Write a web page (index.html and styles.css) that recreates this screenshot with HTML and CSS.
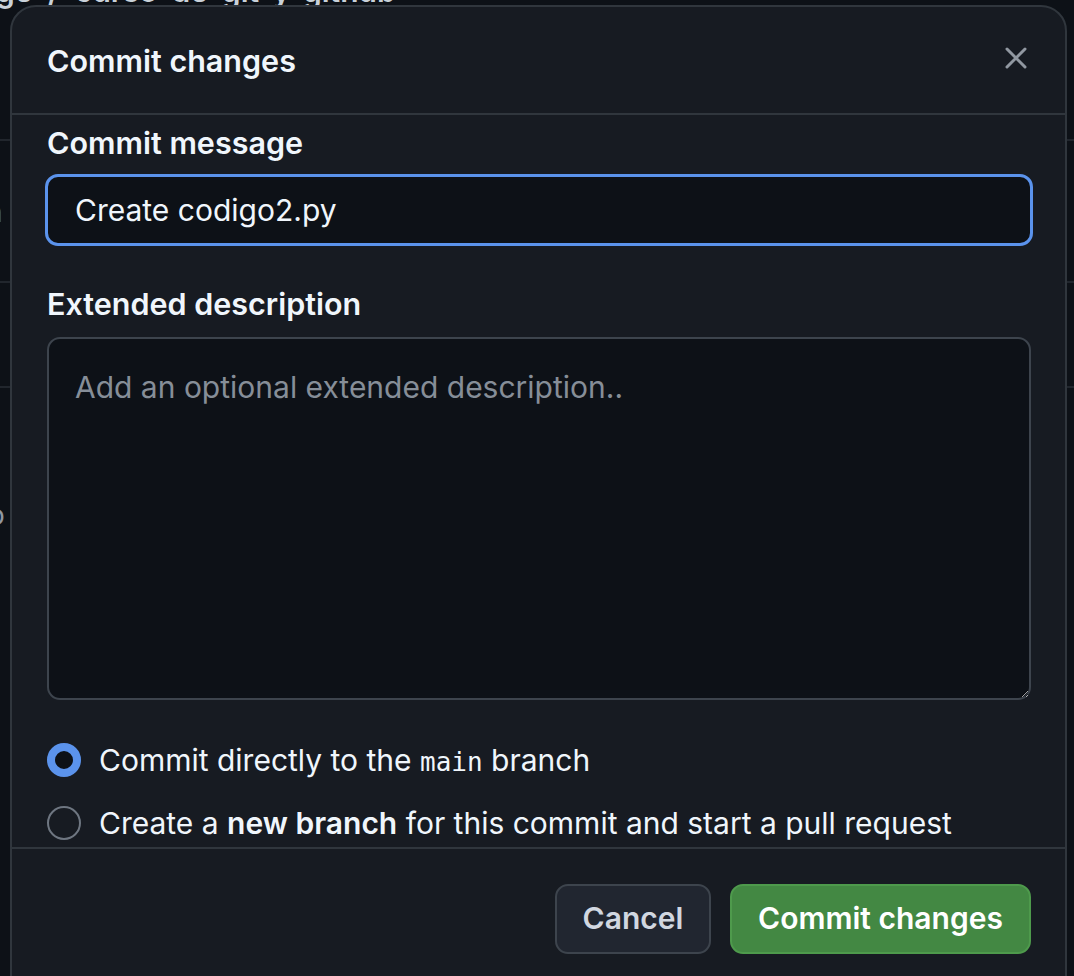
FILE: index.html
```html
<!DOCTYPE html>
<html lang="en">
<head>
<meta charset="utf-8">
<title>Commit changes</title>
<link rel="stylesheet" href="styles.css">
</head>
<body>
<div class="page">
  <div class="crumbs">ge / curso-de-git-y-github</div>
  <div class="page-row row-a"></div>
  <div class="page-row row-b"><span class="edge-link">n</span></div>
  <div class="page-row row-c"></div>
  <div class="page-row row-d"><span class="edge-text">o</span></div>
</div>

<div class="dialog" role="dialog" aria-label="Commit changes">
  <div class="dialog-header">
    <h1 class="dialog-title">Commit changes</h1>
    <button class="close-btn" aria-label="Close">
      <svg width="22" height="22" viewBox="0 0 22 22"><path d="M2 2 L20 20 M20 2 L2 20" stroke="#9198a1" stroke-width="3" stroke-linecap="round" fill="none"/></svg>
    </button>
  </div>
  <div class="dialog-body">
    <label class="field-label" for="msg">Commit message</label>
    <input id="msg" class="text-input" type="text" value="Create codigo2.py">
    <label class="field-label label-ext" for="desc">Extended description</label>
    <textarea id="desc" class="text-area" placeholder="Add an optional extended description.."></textarea>
    <div class="choices">
      <div class="choice">
        <span class="radio checked"></span>
        <span class="choice-text">Commit directly to the <code class="mono">main</code> branch</span>
      </div>
      <div class="choice">
        <span class="radio"></span>
        <span class="choice-text">Create a <strong>new branch</strong> for this commit and start a pull request</span>
      </div>
    </div>
  </div>
  <div class="dialog-footer">
    <button class="btn btn-cancel">Cancel</button>
    <button class="btn btn-primary">Commit changes</button>
  </div>
</div>
</body>
</html>
```
FILE: styles.css
```css
html, body {
  margin: 0;
  padding: 0;
}
body {
  width: 1074px;
  height: 976px;
  overflow: hidden;
  background: #0d1117;
  font-family: Inter, "Noto Sans", "Liberation Sans", sans-serif;
  color: #f0f6fc;
  position: relative;
}

/* background page (mostly hidden behind the dialog) */
.page {
  display: flex;
  flex-direction: column;
}
.crumbs {
  margin-top: -24px;
  height: 30px;
  line-height: 30px;
  margin-left: -4px;
  font-size: 30px;
  color: #c9d1d9;
  font-weight: 600;
  white-space: nowrap;
  word-spacing: 8px;
}
.page-row {
  border-bottom: 2px solid #21262d;
  position: relative;
}
.row-a { height: 133px; }
.row-b { height: 140px; }
.row-c { height: 103px; }
.row-d { height: 300px; border-bottom: none; }
.edge-link {
  display: block;
  padding-top: 54px;
  margin-left: -14px;
  font-size: 28px;
  color: #4493f8;
}
.edge-text {
  display: block;
  padding-top: 110px;
  margin-left: -12px;
  font-size: 28px;
  color: #9198a1;
}

/* dialog */
.dialog {
  position: absolute;
  left: 10px;
  top: 5px;
  width: 1057px;
  height: 1010px;
  box-sizing: border-box;
  background: #171b22;
  border: 2px solid #30363d;
  border-radius: 26px;
  display: flex;
  flex-direction: column;
}
.dialog-header {
  height: 108px;
  box-sizing: border-box;
  border-bottom: 2px solid #30363d;
  display: flex;
  align-items: center;
  justify-content: space-between;
  padding: 0 30px 0 35px;
  flex: none;
}
.dialog-title {
  margin: 0;
  font-size: 30.5px;
  font-weight: 600;
  color: #f0f6fc;
}
.close-btn {
  background: none;
  border: none;
  padding: 8px;
  margin: -4px 0 0;
  display: flex;
  cursor: pointer;
}

.dialog-body {
  display: flex;
  flex-direction: column;
  padding: 8px 34px 0 35px;
  flex: none;
}
.field-label {
  display: block;
  font-size: 30.5px;
  line-height: 40px;
  font-weight: 600;
  color: #f0f6fc;
  margin-bottom: 11px;
}
.label-ext {
  margin-top: 38px;
  margin-bottom: 13px;
}
.text-input {
  box-sizing: border-box;
  height: 72px;
  width: calc(100% + 4px);
  margin-left: -2px;
  border: 3px solid #5b93ec;
  border-radius: 13px;
  background: #0d1117;
  color: #f0f6fc;
  font-family: inherit;
  font-size: 30px;
  padding: 0 0 0 27px;
  outline: none;
}
.text-area {
  box-sizing: border-box;
  height: 363px;
  width: 100%;
  border: 2px solid #3d444d;
  border-radius: 13px;
  background: #0d1117;
  color: #f0f6fc;
  font-family: inherit;
  font-size: 30px;
  line-height: 36px;
  padding: 30px 26px;
  resize: vertical;
  outline: none;
  color-scheme: dark;
  display: block;
}
.text-area::placeholder {
  color: #868e98;
}

.choices {
  display: flex;
  flex-direction: column;
  gap: 23px;
  margin-top: 40px;
}
.choice {
  display: flex;
  align-items: center;
  gap: 18px;
  height: 40px;
  font-size: 30px;
  color: #f0f6fc;
}
.radio {
  width: 34px;
  height: 34px;
  box-sizing: border-box;
  border-radius: 50%;
  border: 2px solid #6e7681;
  flex: none;
}
.radio.checked {
  border: 8px solid #5b93ec;
  background: #0d1117;
}
.mono {
  font-family: "DejaVu Sans Mono", "Liberation Mono", monospace;
  font-size: 26px;
}
.choice-text strong {
  font-weight: 600;
}

.dialog-footer {
  margin-top: 4px;
  border-top: 2px solid #30363d;
  display: flex;
  justify-content: flex-end;
  gap: 19px;
  padding: 35px 34px 0 0;
  flex: none;
}
.btn {
  height: 70px;
  box-sizing: border-box;
  border-radius: 13px;
  font-family: inherit;
  font-size: 30px;
  font-weight: 600;
  padding: 0 0 2px;
  cursor: pointer;
}
.btn-cancel {
  width: 156px;
  background: #212630;
  border: 2px solid #3d444d;
  color: #d1d7e0;
}
.btn-primary {
  width: 301px;
  background: #438843;
  border: 2px solid #4e9a4c;
  color: #ffffff;
}
```
